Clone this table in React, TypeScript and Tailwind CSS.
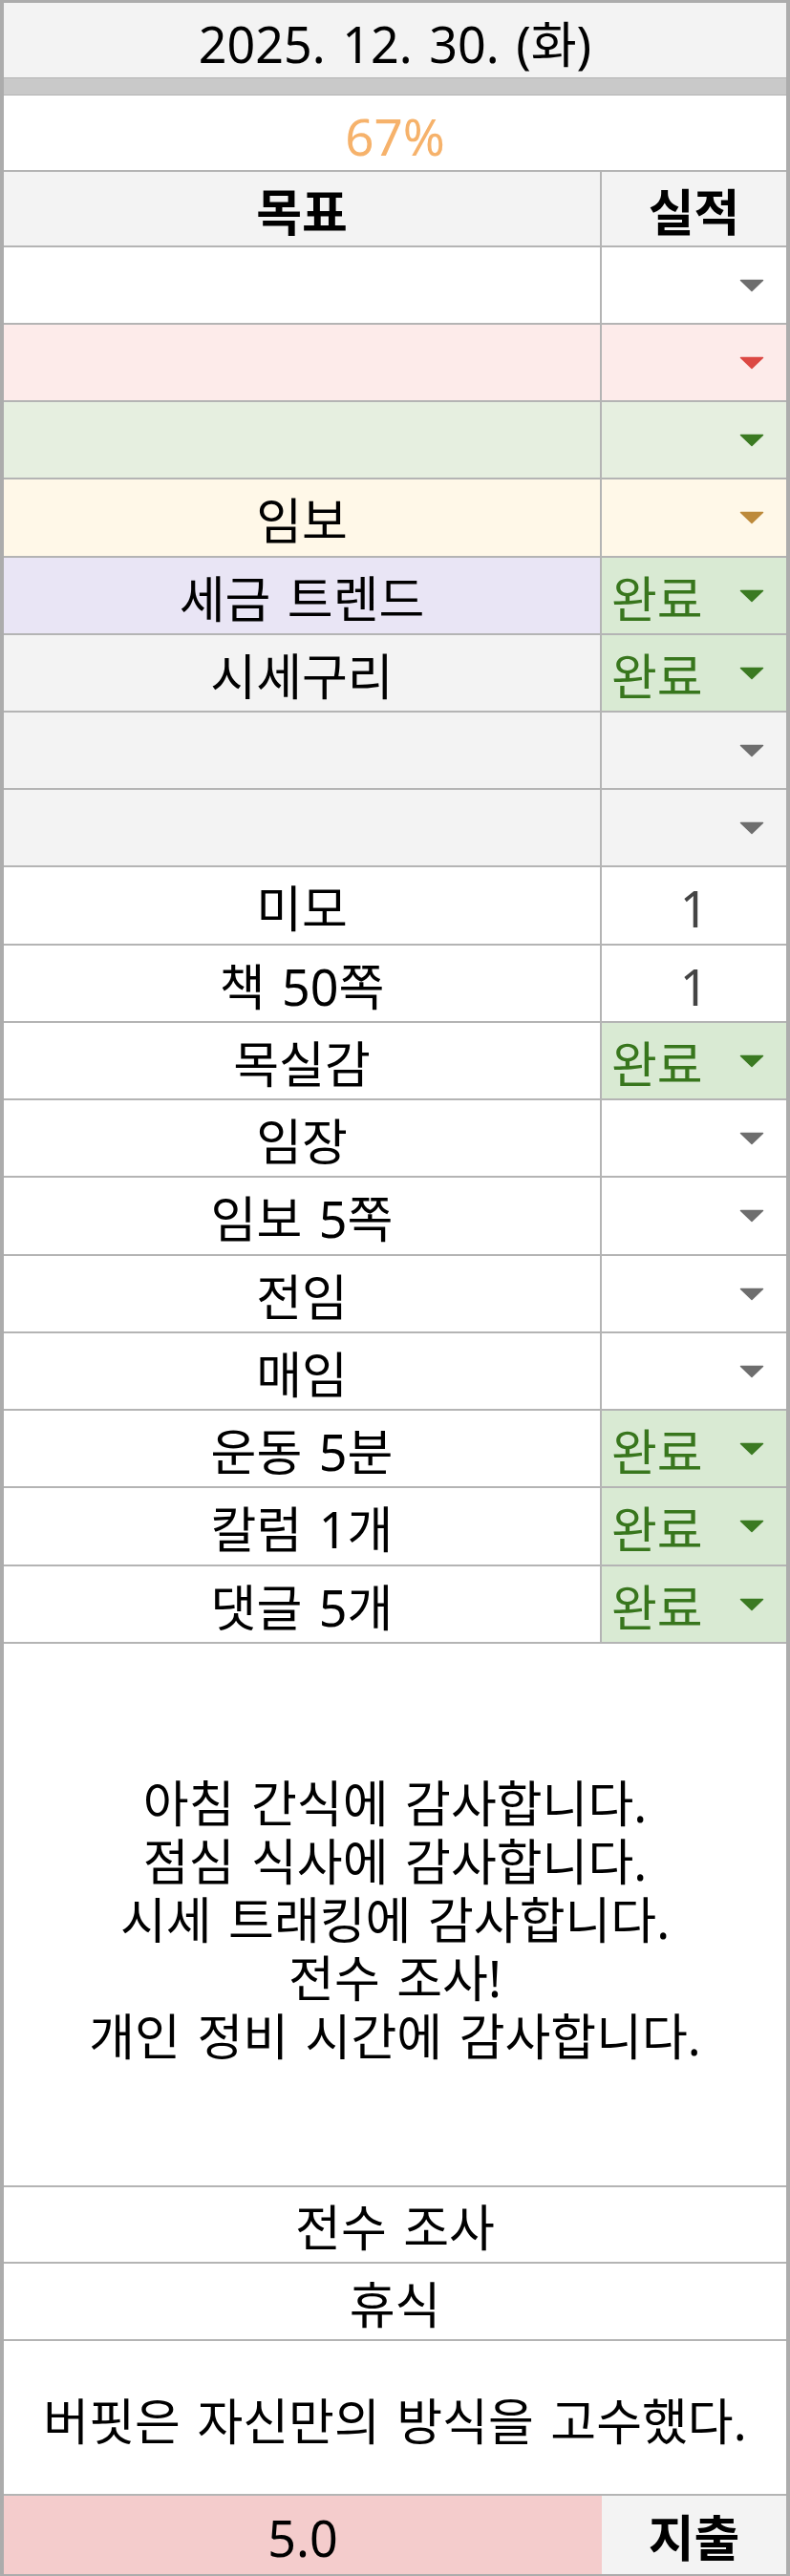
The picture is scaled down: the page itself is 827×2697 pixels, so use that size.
import React from "react";

type Row = {
  label: string;
  bg: string;
  cell?: string;
  arrow?: string;
  done?: boolean;
  value?: string;
  tall?: boolean;
};

const GRAY = "#6e6e6e";
const GREEN = "#3b7a22";

const rows: Row[] = [
  { label: "", bg: "bg-white", arrow: GRAY },
  { label: "", bg: "bg-[#fdebea]", arrow: "#dc4843" },
  { label: "", bg: "bg-[#e6efe0]", arrow: GREEN },
  { label: "임보", bg: "bg-[#fff8e8]", arrow: "#bd8a3a", tall: true },
  { label: "세금 트렌드", bg: "bg-[#e9e5f5]", cell: "bg-[#d9ead3]", done: true },
  { label: "시세구리", bg: "bg-[#f3f3f3]", cell: "bg-[#d9ead3]", done: true },
  { label: "", bg: "bg-[#f3f3f3]", arrow: GRAY },
  { label: "", bg: "bg-[#f3f3f3]", arrow: GRAY },
  { label: "미모", bg: "bg-white", value: "1", tall: true },
  { label: "책 50쪽", bg: "bg-white", value: "1" },
  { label: "목실감", bg: "bg-white", cell: "bg-[#d9ead3]", done: true },
  { label: "임장", bg: "bg-white", arrow: GRAY },
  { label: "임보 5쪽", bg: "bg-white", arrow: GRAY, tall: true },
  { label: "전임", bg: "bg-white", arrow: GRAY },
  { label: "매임", bg: "bg-white", arrow: GRAY },
  { label: "운동 5분", bg: "bg-white", cell: "bg-[#d9ead3]", done: true },
  { label: "칼럼 1개", bg: "bg-white", cell: "bg-[#d9ead3]", done: true, tall: true },
  { label: "댓글 5개", bg: "bg-white", cell: "bg-[#d9ead3]", done: true },
];

const thanks = [
  "아침 간식에 감사합니다.",
  "점심 식사에 감사합니다.",
  "시세 트래킹에 감사합니다.",
  "전수 조사!",
  "개인 정비 시간에 감사합니다.",
];

function Arrow({ color }: { color: string }) {
  return (
    <svg width="26" height="14" viewBox="0 0 26 14" className="shrink-0">
      <path d="M1.5 1.5 L24.5 1.5 L13 12.5 Z" fill={color} strokeLinejoin="round" stroke={color} strokeWidth="1.5" />
    </svg>
  );
}

function StatusCell({ row }: { row: Row }) {
  const bg = row.cell ?? row.bg;
  if (row.done) {
    return (
      <div className={`w-[193px] h-full flex items-center justify-between pl-[10px] pr-[23px] ${bg}`}>
        <span className="pt-[6px] text-[#38761d]">완료</span>
        <Arrow color={GREEN} />
      </div>
    );
  }
  if (row.value) {
    return (
      <div className={`w-[193px] h-full flex items-center justify-center ${bg}`}>
        <span className="pt-[6px] text-[#444]">{row.value}</span>
      </div>
    );
  }
  return (
    <div className={`w-[193px] h-full flex items-center justify-end pr-[23px] ${bg}`}>
      <Arrow color={row.arrow ?? GRAY} />
    </div>
  );
}

export default function App() {
  return (
    <div className="w-[827px] bg-white font-['Noto_Sans','Noto_Sans_CJK_KR',sans-serif] text-[52px] leading-none text-black [word-spacing:4px]">
      <div className="border-x-4 border-t-[3px] border-b-2 border-[#acacac]">
        {/* date */}
        <div className="h-[78px] bg-[#f3f3f3] flex items-center justify-center pt-[8px] text-[52px]">
          2025. 12. 30. (화)
        </div>
        <div className="h-[19px] bg-[#c9c9c9] border-y border-[#b4b4b4]" />

        {/* progress */}
        <div className="h-[80px] border-b-2 border-[#b4b4b4] bg-white flex items-center justify-center pt-[6px] text-[53px] text-[#f6b26b]">
          67%
        </div>

        {/* header */}
        <div className="h-[79px] border-b-2 border-[#b4b4b4] bg-[#f3f3f3] flex font-bold">
          <div className="w-[626px] border-r-2 border-[#b4b4b4] flex items-center justify-center pt-[6px]">목표</div>
          <div className="w-[193px] flex items-center justify-center pt-[6px]">실적</div>
        </div>

        {rows.map((row, i) => (
          <div
            key={i}
            className={`${row.tall ? "h-[82px]" : "h-[81px]"} border-b-2 border-[#b4b4b4] flex`}
          >
            <div className={`w-[626px] h-full border-r-2 border-[#b4b4b4] flex items-center justify-center pt-[6px] ${row.bg}`}>
              {row.label}
            </div>
            <StatusCell row={row} />
          </div>
        ))}

        {/* gratitude */}
        <div className="h-[569px] border-b-2 border-[#b4b4b4] bg-white flex flex-col items-center justify-center pt-[10px] leading-[61px]">
          {thanks.map((t) => (
            <div key={t}>{t}</div>
          ))}
        </div>

        <div className="h-[80px] border-b-2 border-[#b4b4b4] bg-white flex items-center justify-center pt-[6px]">
          전수 조사
        </div>
        <div className="h-[81px] border-b-2 border-[#b4b4b4] bg-white flex items-center justify-center pt-[6px]">
          휴식
        </div>
        <div className="h-[162px] border-b-2 border-[#b4b4b4] bg-white flex items-center justify-center pt-[8px]">
          버핏은 자신만의 방식을 고수했다.
        </div>

        <div className="h-[82px] flex">
          <div className="w-[626px] bg-[#f4cccc] flex items-center justify-center pt-[6px]">5.0</div>
          <div className="w-[193px] bg-[#f3f3f3] flex items-center justify-center pt-[6px] font-bold">지출</div>
        </div>
      </div>
    </div>
  );
}
